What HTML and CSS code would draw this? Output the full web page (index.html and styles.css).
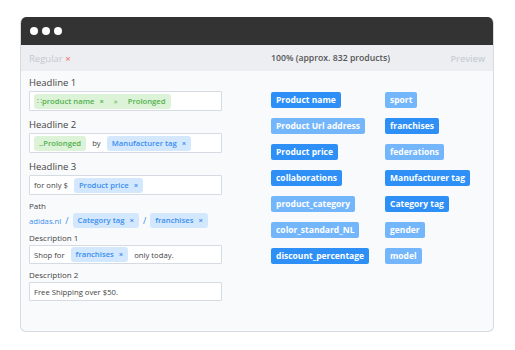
FILE: index.html
```html
<!DOCTYPE html>
<html lang="en">
<head>
    <meta charset="UTF-8">
    <title>Ad preview</title>
    <link rel="stylesheet" href="styles.css">
</head>
<body>
    <div class="window">
        <div class="titlebar">
            <span class="dot"></span>
            <span class="dot"></span>
            <span class="dot"></span>
        </div>

        <div class="toolbar">
            <div class="toolbar-left">Regular <span class="remove">&times;</span></div>
            <div class="toolbar-right">
                <span class="count">100% (approx. 832 products)</span>
                <span class="preview">Preview</span>
            </div>
        </div>

        <div class="content">
            <!-- Formulier -->
            <div class="fields">
                <div class="label">Headline 1</div>
                <div class="input">
                    <span class="tag green"><span class="grip">&#8759;</span>product name <span class="x">&times;</span> <span class="arrows">&raquo;</span> Prolonged</span>
                </div>

                <div class="label">Headline 2</div>
                <div class="input">
                    <span class="tag green">..Prolonged</span>
                    <span class="word">by</span>
                    <span class="tag blue">Manufacturer tag <span class="x">&times;</span></span>
                </div>

                <div class="label">Headline 3</div>
                <div class="input">
                    <span class="word">for only $</span>
                    <span class="tag blue">Product price <span class="x">&times;</span></span>
                </div>

                <div class="label small">Path</div>
                <div class="path">
                    <span class="domain">adidas.nl</span>
                    <span class="slash">/</span>
                    <span class="tag blue">Category tag <span class="x">&times;</span></span>
                    <span class="slash">/</span>
                    <span class="tag blue">franchises <span class="x">&times;</span></span>
                </div>

                <div class="label small">Description 1</div>
                <div class="input">
                    <span class="word">Shop for</span>
                    <span class="tag blue">franchises <span class="x">&times;</span></span>
                    <span class="word">only today.</span>
                </div>

                <div class="label small">Description 2</div>
                <div class="input">
                    <span class="word">Free Shipping over $50.</span>
                </div>
            </div>

            <!-- Beschikbare velden -->
            <div class="chips">
                <span class="chip">Product name</span>
                <span class="chip light">sport</span>
                <span class="chip light">Product Url address</span>
                <span class="chip">franchises</span>
                <span class="chip">Product price</span>
                <span class="chip light">federations</span>
                <span class="chip">collaborations</span>
                <span class="chip">Manufacturer tag</span>
                <span class="chip light">product_category</span>
                <span class="chip">Category tag</span>
                <span class="chip light">color_standard_NL</span>
                <span class="chip light">gender</span>
                <span class="chip">discount_percentage</span>
                <span class="chip light">model</span>
            </div>
        </div>
    </div>
</body>
</html>
```

FILE: styles.css
```css
body {
    margin: 0;
    background: #fff;
    font-family: "Open Sans", sans-serif;
    color: #444;
}

.window {
    margin: 17px 0 0 20px;
    width: 472px;
    height: 314px;
    border: 1px solid #d5dae3;
    border-top: none;
    border-radius: 6px;
    overflow: hidden;
    background: #f9fafb;
}

.titlebar {
    height: 28px;
    background: #333;
    display: flex;
    align-items: center;
    gap: 4px;
    padding-left: 10px;
    margin: 0 -1px;
}

.dot {
    width: 8px;
    height: 8px;
    border-radius: 50%;
    background: #fff;
}

.toolbar {
    height: 26px;
    background: #eceef2;
    display: flex;
    align-items: center;
    font-size: 9.5px;
}

.toolbar-left {
    width: 242px;
    padding-left: 8px;
    color: #c3c8d1;
}

.toolbar-left .remove {
    color: #f08a8a;
    font-weight: bold;
}

.toolbar-right {
    flex: 1;
    display: flex;
    justify-content: space-between;
    padding-right: 8px;
}

.count {
    color: #555;
    font-size: 8.7px;
    font-weight: 600;
}

.preview {
    color: #c9ced6;
    font-size: 9px;
    font-weight: 600;
}

.content {
    display: flex;
}

.fields {
    width: 193px;
    padding: 6px 0 0 8px;
    margin-right: 49px;
}

.label {
    font-size: 9.5px;
    line-height: 12px;
    margin-bottom: 2px;
}

.label.small {
    font-size: 8px;
    line-height: 10px;
    margin-top: -2px;
}

.input {
    height: 18px;
    border: 1px solid #d5dae3;
    border-radius: 1px;
    background: #fff;
    display: flex;
    align-items: center;
    gap: 6px;
    padding-left: 4px;
    margin-bottom: 8px;
    font-size: 7.7px;
    color: #444;
}

.label.small + .input {
    height: 17px;
    margin-bottom: 8px;
}

.tag {
    height: 15px;
    line-height: 15px;
    padding: 0 5px;
    border-radius: 3px;
    font-size: 7.7px;
    font-weight: 600;
    white-space: nowrap;
}

.tag.green {
    background: #dcf3d8;
    color: #52b14e;
}

.tag.blue {
    background: #d3e8fd;
    color: #3a8ef0;
}

.tag .x {
    font-weight: bold;
    margin-left: 3px;
}

.tag .grip {
    color: #7a9a78;
    font-weight: normal;
    margin-left: -2px;
}

.tag .arrows {
    font-weight: normal;
    margin: 0 8px;
}

.word {
    white-space: nowrap;
}

.path {
    display: flex;
    align-items: center;
    gap: 4px;
    height: 15px;
    margin-bottom: 7px;
    font-size: 7.7px;
}

.domain {
    color: #3a8ef0;
}

.slash {
    color: #3a8ef0;
    font-size: 9px;
}

.chips {
    display: grid;
    grid-template-columns: 114px auto;
    row-gap: 10px;
    align-content: start;
    align-items: start;
    justify-items: start;
    padding-top: 21px;
}

.chip {
    height: 16px;
    line-height: 16px;
    padding: 0 5px;
    border-radius: 2px;
    background: #2e8ff6;
    color: #fff;
    font-size: 8.5px;
    font-weight: 700;
    white-space: nowrap;
}

.chip.light {
    background: #74b6fb;
}
```
